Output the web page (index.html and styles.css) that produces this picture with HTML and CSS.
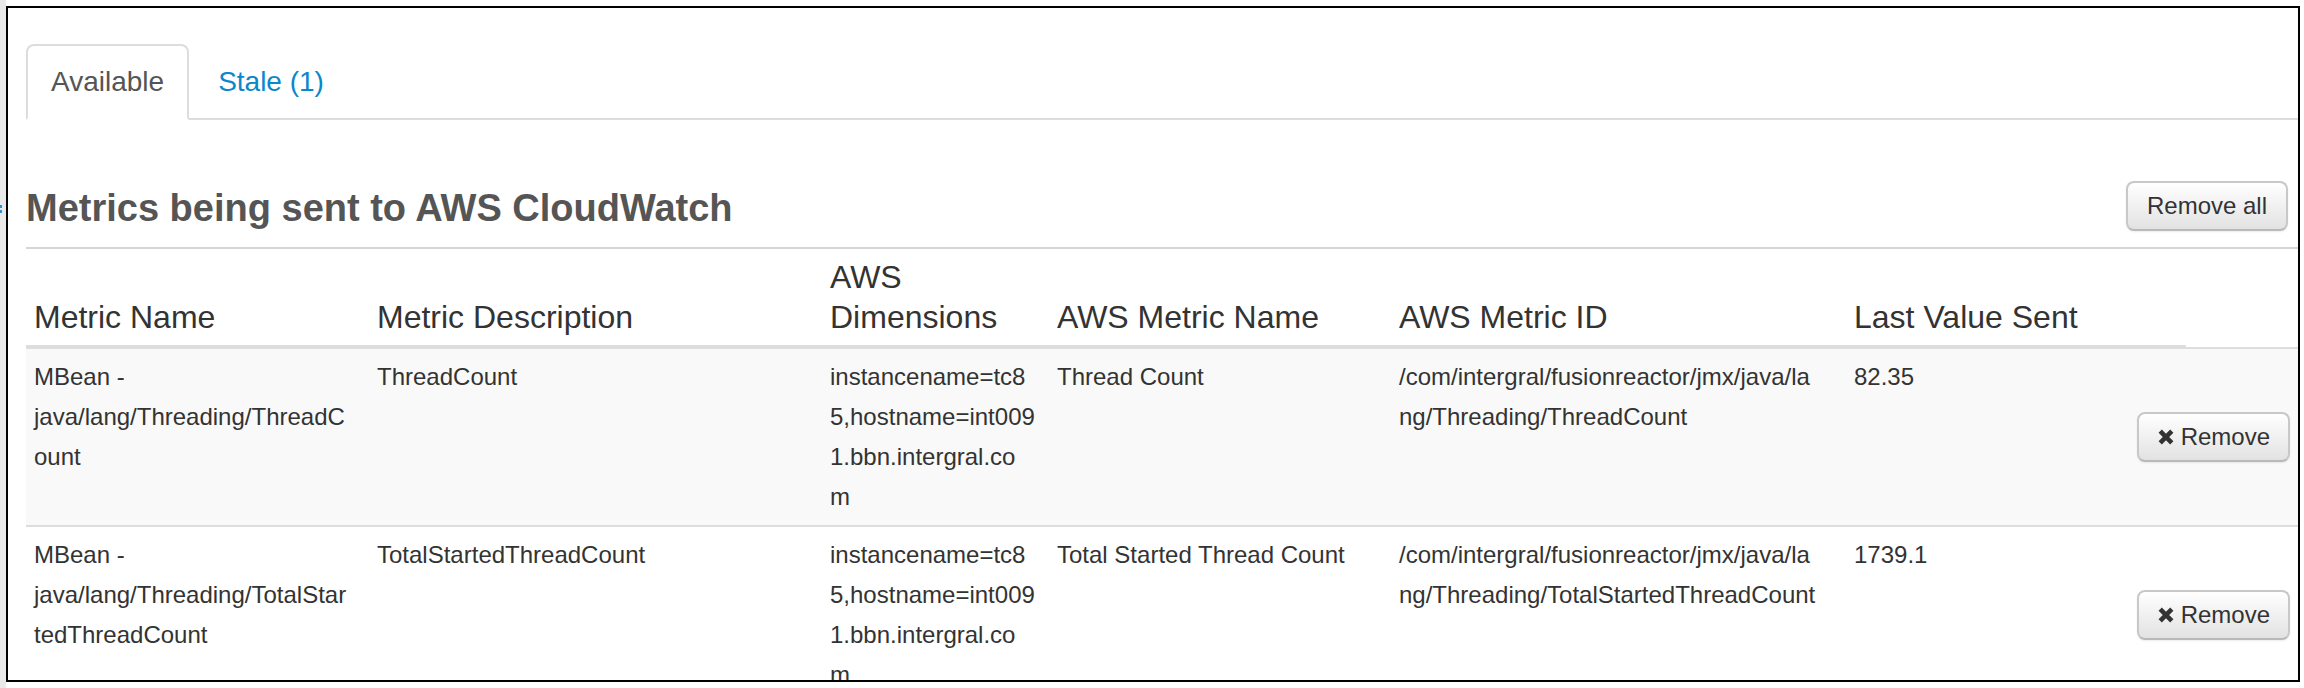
FILE: index.html
```html
<!DOCTYPE html>
<html lang="en">
<head>
<meta charset="utf-8">
<title>AWS CloudWatch Metrics</title>
<link rel="stylesheet" href="styles.css">
</head>
<body>
<div class="page">
  <div class="gutter"><span class="gutter-mark"></span></div>
  <div class="frame">
    <div class="content">
      <ul class="tabs">
        <li class="tab active"><a class="tab-link" href="#">Available</a></li>
        <li class="tab"><a class="tab-link" href="#">Stale (1)</a></li>
      </ul>

      <div class="section-head">
        <h3 class="section-title">Metrics being sent to AWS CloudWatch</h3>
        <button class="btn" type="button">Remove all</button>
      </div>

      <table class="metrics">
        <colgroup>
          <col class="col-name">
          <col class="col-desc">
          <col class="col-dims">
          <col class="col-aws-name">
          <col class="col-aws-id">
          <col class="col-last">
          <col class="col-action">
        </colgroup>
        <thead>
          <tr>
            <th>Metric Name</th>
            <th>Metric Description</th>
            <th>AWS<br>Dimensions</th>
            <th>AWS Metric Name</th>
            <th>AWS Metric ID</th>
            <th>Last Value Sent</th>
            <th class="th-action"></th>
          </tr>
        </thead>
        <tbody>
          <tr class="row-striped">
            <td>MBean -<br>java/lang/Threading/ThreadC<br>ount</td>
            <td>ThreadCount</td>
            <td class="td-dims">instancename=tc8<br>5,hostname=int009<br>1.bbn.intergral.co<br>m</td>
            <td>Thread Count</td>
            <td>/com/intergral/fusionreactor/jmx/java/la<br>ng/Threading/ThreadCount</td>
            <td>82.35</td>
            <td class="td-action">
              <button class="btn" type="button"><svg class="icon-x" viewBox="0 0 18 16" aria-hidden="true"><path d="M3.2 2.2 L14.8 13.8 M14.8 2.2 L3.2 13.8"/></svg>Remove</button>
            </td>
          </tr>
          <tr>
            <td>MBean -<br>java/lang/Threading/TotalStar<br>tedThreadCount</td>
            <td>TotalStartedThreadCount</td>
            <td class="td-dims">instancename=tc8<br>5,hostname=int009<br>1.bbn.intergral.co<br>m</td>
            <td>Total Started Thread Count</td>
            <td>/com/intergral/fusionreactor/jmx/java/la<br>ng/Threading/TotalStartedThreadCount</td>
            <td>1739.1</td>
            <td class="td-action">
              <button class="btn" type="button"><svg class="icon-x" viewBox="0 0 18 16" aria-hidden="true"><path d="M3.2 2.2 L14.8 13.8 M14.8 2.2 L3.2 13.8"/></svg>Remove</button>
            </td>
          </tr>
        </tbody>
      </table>
    </div>
  </div>
</div>
</body>
</html>
```

FILE: styles.css
```css
html, body {
  margin: 0;
  padding: 0;
  height: 688px;
  overflow: hidden;
  background: #fff;
}

body {
  font-family: "Liberation Sans", Arial, Helvetica, sans-serif;
  color: #333;
}

.page {
  display: flex;
  height: 688px;
}

.gutter {
  flex: none;
  width: 6px;
  background: #e9e9e9;
  display: flex;
  flex-direction: column;
}

.gutter-mark {
  margin-top: 205px;
  width: 2px;
  height: 10px;
  background: repeating-linear-gradient(#2a8fd4 0 3px, transparent 3px 5px);
}

.frame {
  flex: 1;
  margin: 6px 4px 6px 0;
  border: 2px solid #000;
  overflow: hidden;
}

.content {
  padding: 36px 0 0 18px;
}

/* Tabs */
.tabs {
  list-style: none;
  margin: 0;
  padding: 0;
  display: flex;
  gap: 4px;
  border-bottom: 2px solid #ddd;
}

.tab {
  margin-bottom: -2px;
}

.tab-link {
  display: block;
  padding: 16px 23px;
  font-size: 28px;
  line-height: 40px;
  border: 2px solid transparent;
  border-radius: 8px 8px 0 0;
  color: #0a88cc;
  text-decoration: none;
}

.tab.active .tab-link {
  color: #555;
  background: #fff;
  border-color: #ddd #ddd transparent;
}

/* Section heading */
.section-head {
  display: flex;
  align-items: center;
  justify-content: space-between;
  margin-top: 61px;
  padding: 0 10px 16px 0;
  border-bottom: 2px solid #d6d6d6;
}

.section-title {
  margin: 0;
  padding-top: 3px;
  font-size: 38px;
  line-height: 42px;
  font-weight: bold;
  color: #555;
}

/* Buttons */
.btn {
  display: inline-flex;
  align-items: center;
  gap: 6px;
  font-family: "Liberation Sans", Arial, Helvetica, sans-serif;
  font-size: 24px;
  line-height: 26px;
  padding: 10px 19px;
  border: 2px solid #c8c8c8;
  border-bottom-color: #b9b9b9;
  border-radius: 8px;
  background: linear-gradient(#ffffff, #e2e2e2);
  color: #333;
  box-shadow: 0 1px 2px rgba(0, 0, 0, 0.08);
  cursor: pointer;
}

.icon-x {
  width: 18px;
  height: 16px;
  flex: none;
}

.icon-x path {
  fill: none;
  stroke: #333;
  stroke-width: 4.6;
  stroke-linecap: butt;
}

/* Table */
.metrics {
  width: 100%;
  table-layout: fixed;
  border-collapse: separate;
  border-spacing: 0;
}

.col-name { width: 343px; }
.col-desc { width: 453px; }
.col-dims { width: 227px; }
.col-aws-name { width: 342px; }
.col-aws-id { width: 455px; }
.col-last { width: 280px; }
.col-action { width: 172px; }

.metrics th {
  font-size: 32px;
  font-weight: normal;
  line-height: 40px;
  padding: 8px;
  text-align: left;
  vertical-align: bottom;
  white-space: nowrap;
  color: #333;
  border-bottom: 4px solid #ddd;
}

.metrics th.th-action {
  border-bottom-width: 2px;
  background: linear-gradient(#ddd, #ddd) left bottom / 60px 2px no-repeat;
}

.metrics td {
  font-size: 24px;
  line-height: 40px;
  padding: 8px;
  vertical-align: top;
  white-space: nowrap;
  color: #333;
}

.metrics tbody tr + tr td {
  border-top: 2px solid #ddd;
}

.metrics tr.row-striped td {
  background: #f9f9f9;
}

.metrics td.td-action {
  vertical-align: middle;
  text-align: right;
}

.td-action .btn {
  padding: 10px 18px;
}
```
